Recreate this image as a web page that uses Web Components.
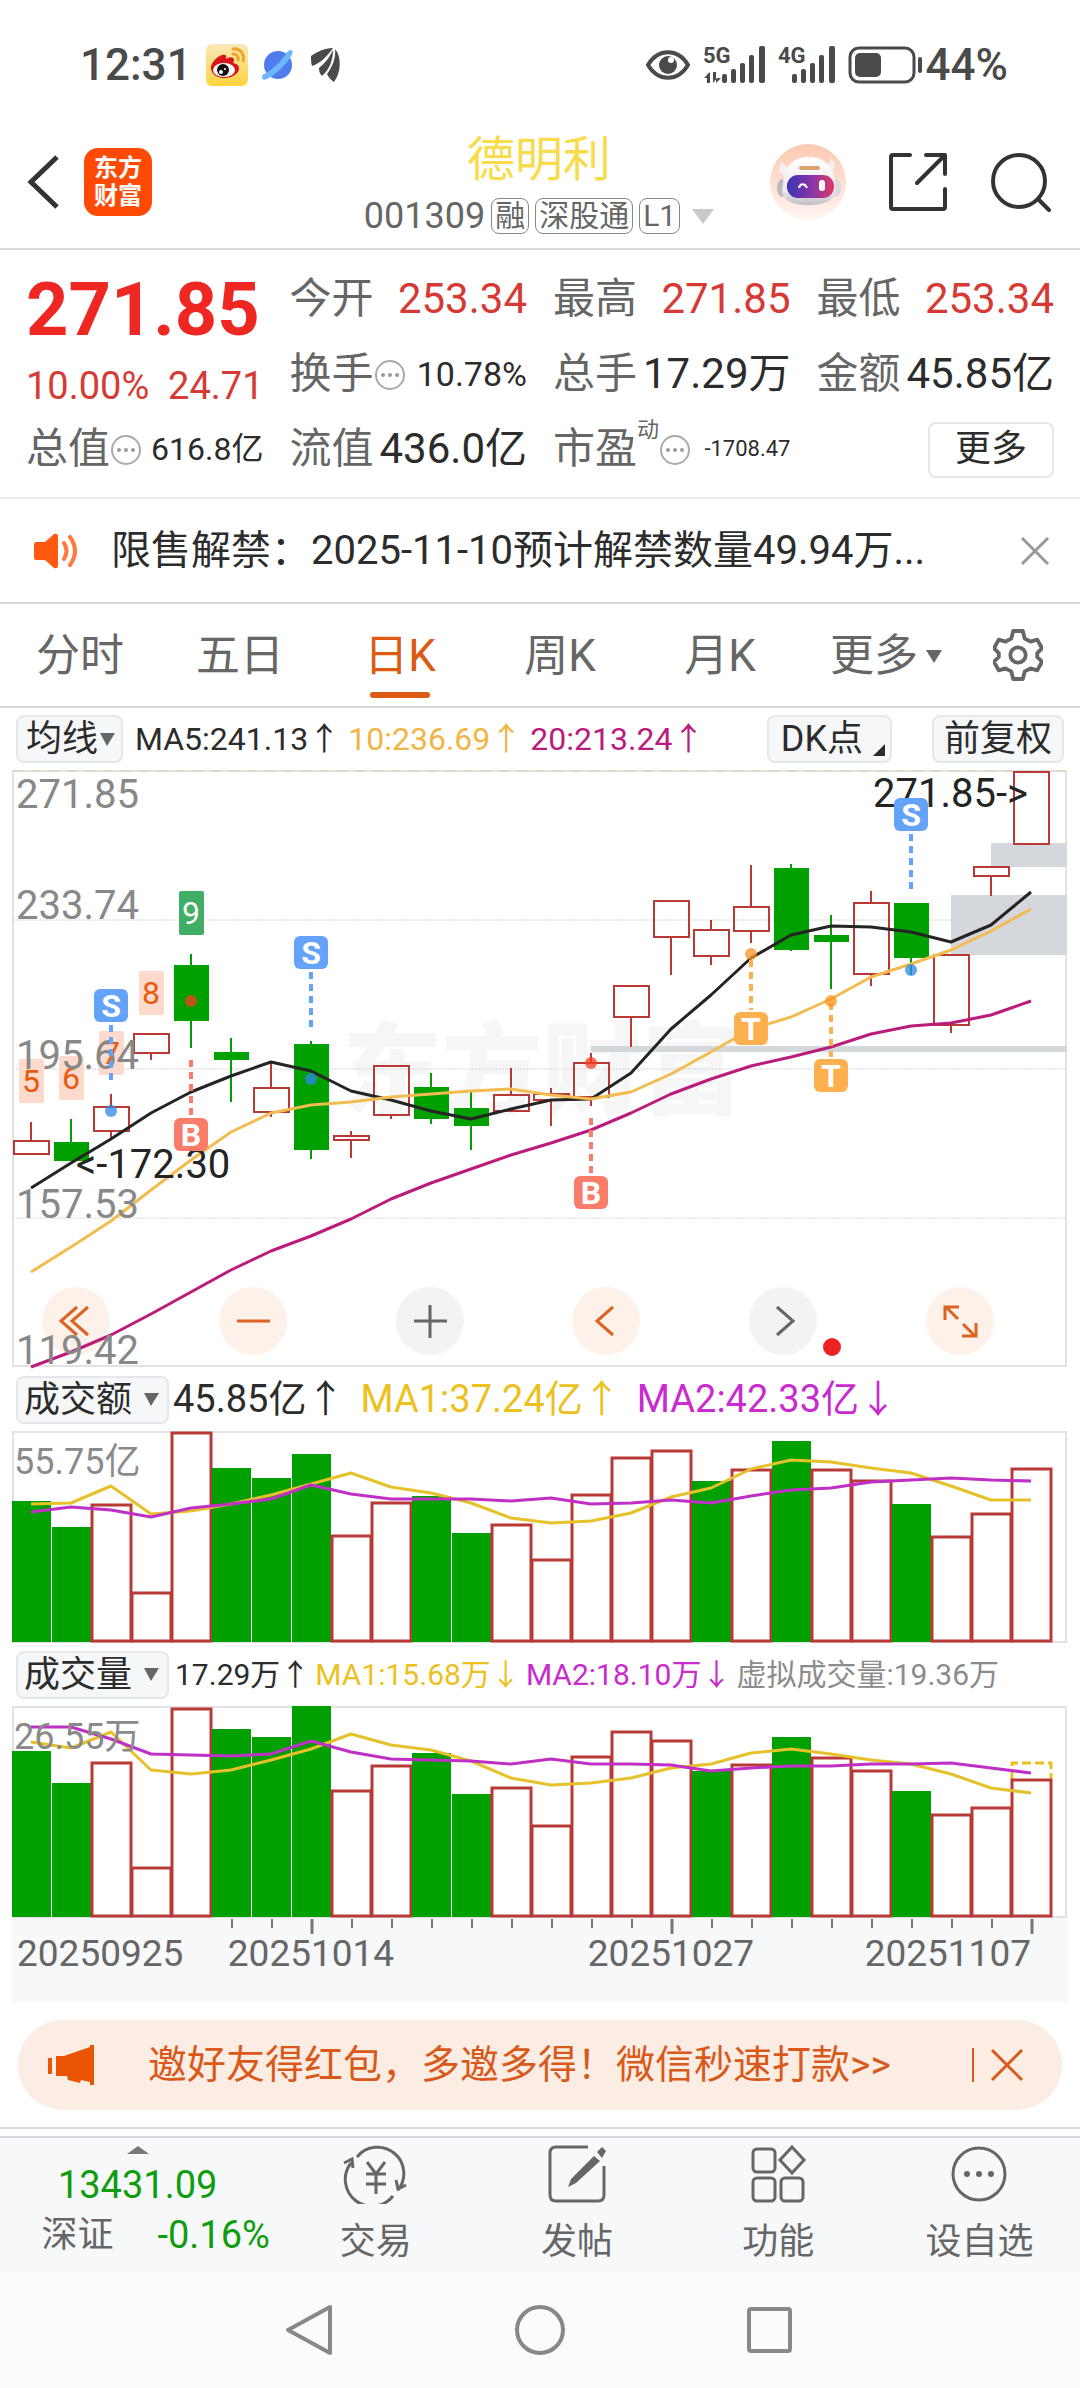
<!DOCTYPE html>
<html lang="zh-CN">
<head>
<meta charset="utf-8">
<meta name="viewport" content="width=device-width, initial-scale=1">
<title>德明利 001309</title>
<style>
  body {
    margin: 0;
    background: #fff;
    color: #2c2c2c;
    font-family: Roboto, "Noto Sans CJK SC", sans-serif;
    font-size: 36px;
    line-height: 1.2;
  }
  main {
    padding: 0 12px 17px;
    border-bottom: 2px solid #d6dade;
  }
</style>
</head>
<body>
<status-bar></status-bar>
<stock-header code="001309">德明利</stock-header>
<quote-panel></quote-panel>
<notice-bar>限售解禁：2025-11-10预计解禁数量49.94万...</notice-bar>
<period-tabs></period-tabs>
<main>
  <indicator-row>
    <drop-down slot="picker" label="均线" class="small"></drop-down>
    <span style="color:#2c2c2c">MA5:241.13↑</span>
    <span style="color:#f2b544">10:236.69↑</span>
    <span style="color:#b91c7c">20:213.24↑</span>
    <corner-button slot="end" corner>DK点</corner-button>
    <corner-button slot="end">前复权</corner-button>
  </indicator-row>
  <candle-chart></candle-chart>
  <indicator-row class="large">
    <drop-down slot="picker" label="成交额"></drop-down>
    <span style="color:#2c2c2c">45.85亿↑</span>
    <span style="color:#ecc11f">MA1:37.24亿↑</span>
    <span style="color:#c92bcf">MA2:42.33亿↓</span>
  </indicator-row>
  <volume-chart kind="amount"></volume-chart>
  <indicator-row class="compact">
    <drop-down slot="picker" label="成交量"></drop-down>
    <span style="color:#2c2c2c">17.29万↑</span>
    <span style="color:#ecc11f">MA1:15.68万↓</span>
    <span style="color:#c92bcf">MA2:18.10万↓</span>
    <span style="color:#8c8c8c">虚拟成交量:19.36万</span>
  </indicator-row>
  <volume-chart kind="volume"></volume-chart>
  <date-axis></date-axis>
  <promo-banner>邀好友得红包，多邀多得！微信秒速打款&gt;&gt;</promo-banner>
</main>
<bottom-bar></bottom-bar>
<nav-bar></nav-bar>

<script>
const RED = '#b83a36';
const GREEN = '#00a000';
const STEP = 40;
const FIRST = 19;
const cx = i => FIRST + i * STEP;
const points = list => list.map((y, i) => `${cx(i)},${y}`).join(' ');

const BUTTON_RESET = `
  button {
    padding: 0;
    border: none;
    background: none;
    color: inherit;
    font: inherit;
    cursor: pointer;
  }
  svg { display: block; }
`;

class StatusBar extends HTMLElement {
  constructor() {
    super();
    this.attachShadow({mode: 'open'});
  }

  connectedCallback() {
    this.shadowRoot.innerHTML = `
    <style>
      :host {
        display: flex;
        align-items: center;
        justify-content: space-between;
        height: 110px;
        padding: 20px 72px 0 80px;
        box-sizing: border-box;
        color: #4a4a4a;
        font-size: 44px;
        font-weight: 500;
      }
      div { display: flex; align-items: center; gap: 14px; }
      .right { gap: 12px; }
      .right span { margin-left: -10px; }
      svg { display: block; overflow: visible; }
    </style>
    <div>
      <span>12:31</span>
      <svg width="42" height="42" viewBox="0 0 42 42">
        <defs><linearGradient id="w" x1="0" y1="0" x2="0" y2="1"><stop offset="0" stop-color="#fbe9b9"/><stop offset="1" stop-color="#ffd43c"/></linearGradient></defs>
        <rect width="42" height="42" rx="6" fill="url(#w)"/>
        <path d="M5 25c-1-5 5-12 11-14 4-1 5 1 4 4 3-2 8-3 8 1 0 2-1 2-1 3 8 1 7 8 3 11-6 6-23 6-25-5z" fill="#d8151b"/>
        <ellipse cx="18" cy="26" rx="11" ry="7" fill="#fff"/>
        <circle cx="17" cy="26" r="6" fill="#111"/>
        <circle cx="15" cy="28" r="2" fill="#fff"/><circle cx="19" cy="25" r="1" fill="#fff"/>
        <path d="M27 5c7-1 12 5 10 12M27 10c4 0 6 3 5 6" fill="none" stroke="#f0a52c" stroke-width="3" stroke-linecap="round"/>
      </svg>
      <svg width="34" height="34" viewBox="0 0 34 34">
        <circle cx="16" cy="17" r="14" fill="#4f7df0"/>
        <path d="M24 5c4-4 8-4 6 1-2 7-17 22-25 25-5 2-6-1-4-5 3 1 20-13 23-21z" fill="#6cb8fb"/>
      </svg>
      <svg width="32" height="36" viewBox="0 0 32 36" fill="#4a4a4a">
        <path d="M23 1C14 1 7 5 1 9c0 4 0 7 1 10 7-2 15-9 21-18z"/>
        <path d="M23 3c-4 8-8 13-14 18 0 4 1 6 3 8 7-6 11-15 11-26z"/>
        <path d="M25 2c1 8-2 17-8 25 2 4 4 6 7 8 7-9 8-25 1-33z"/>
      </svg>
    </div>
    <div class="right">
      <svg width="46" height="32" viewBox="0 0 46 32">
        <path d="M3 16C13-1 33-1 43 16 33 33 13 33 3 16z" fill="none" stroke="#4a4a4a" stroke-width="4"/>
        <circle cx="23" cy="16" r="9" fill="#4a4a4a"/><circle cx="26" cy="11" r="3" fill="#fff"/>
      </svg>
      <svg width="63" height="38" viewBox="0 0 63 38" fill="#4a4a4a">
        <text x="0" y="17" font-size="22" font-weight="700">5G</text>
        <path d="M4 26v11h3V26L1 32h4zM10 37V26h3v11l5-5h-4z"/>
        <rect x="19" y="28" width="5" height="9" rx="2"/><rect x="28" y="23" width="5" height="14" rx="2"/>
        <rect x="37" y="17" width="5" height="20" rx="2"/><rect x="46" y="9" width="5" height="28" rx="2"/>
        <rect x="56" y="0" width="6" height="37" rx="2"/>
      </svg>
      <svg width="58" height="38" viewBox="0 0 58 38" fill="#4a4a4a">
        <text x="0" y="17" font-size="22" font-weight="700">4G</text>
        <rect x="14" y="28" width="5" height="9" rx="2"/><rect x="23" y="23" width="5" height="14" rx="2"/>
        <rect x="32" y="17" width="5" height="20" rx="2"/><rect x="41" y="9" width="5" height="28" rx="2"/>
        <rect x="51" y="0" width="6" height="37" rx="2"/>
      </svg>
      <svg width="76" height="38" viewBox="0 0 76 38">
        <rect x="2" y="2" width="64" height="34" rx="9" fill="none" stroke="#4a4a4a" stroke-width="3"/>
        <rect x="7" y="7" width="26" height="24" rx="5" fill="#4a4a4a"/>
        <path d="M72 13v12" stroke="#4a4a4a" stroke-width="4" stroke-linecap="round"/>
      </svg>
      <span>44%</span>
    </div>`;
  }
}
customElements.define('status-bar', StatusBar);

class StockHeader extends HTMLElement {
  constructor() {
    super();
    this.attachShadow({mode: 'open'});
  }

  connectedCallback() {
    this.shadowRoot.innerHTML = `
    <style>
      ${BUTTON_RESET}
      :host {
        display: grid;
        grid-template-columns: 1fr auto 1fr;
        align-items: center;
        height: 140px;
        padding: 6px 28px 0 26px;
        box-sizing: border-box;
        border-bottom: 2px solid #dadada;
      }
      .left, .right { display: flex; align-items: center; }
      .left { gap: 24px; }
      .right { justify-content: flex-end; gap: 42px; }
      .logo {
        width: 68px;
        height: 68px;
        border-radius: 14px;
        background: #ff4a06;
        color: #fff;
        font-size: 24px;
        font-weight: 700;
        line-height: 28px;
        text-align: center;
        display: grid;
        align-content: center;
      }
      h1 {
        margin: 0;
        color: #f8dc4c;
        font-size: 48px;
        font-weight: 400;
        line-height: 68px;
        text-align: center;
      }
      .sub {
        display: flex;
        align-items: center;
        gap: 6px;
        color: #666;
        line-height: 44px;
      }
      .tag {
        padding: 0 3px;
        border: 1px solid #888;
        border-radius: 8px;
        font-size: 30px;
        line-height: 34px;
      }
      .sub svg { margin-left: 6px; }
    </style>
    <div class="left">
      <button aria-label="返回"><svg width="34" height="58" viewBox="0 0 34 58"><path d="M31 4L5 29l26 25" fill="none" stroke="#333" stroke-width="5"/></svg></button>
      <div class="logo"><span>东方</span><span>财富</span></div>
    </div>
    <div>
      <h1><slot></slot></h1>
      <div class="sub">
        <span>${this.getAttribute('code')}</span>
        <span class="tag">融</span><span class="tag">深股通</span><span class="tag">L1</span>
        <svg width="22" height="15"><path d="M0 0h22L11 15z" fill="#c8c8c8"/></svg>
      </div>
    </div>
    <div class="right">
      <button aria-label="助手"><svg width="76" height="76" viewBox="0 0 76 76">
        <defs>
          <linearGradient id="bg" x1="0" y1="0" x2="0" y2="1"><stop offset="0" stop-color="#fcc9b0"/><stop offset="1" stop-color="#fff5f0"/></linearGradient>
          <linearGradient id="face"><stop offset="0" stop-color="#3a35b4"/><stop offset=".55" stop-color="#8b35a4"/><stop offset="1" stop-color="#e03a64"/></linearGradient>
          <linearGradient id="head" x1="0" y1="0" x2="0" y2="1"><stop offset="0" stop-color="#fff"/><stop offset=".7" stop-color="#ece9ec"/><stop offset="1" stop-color="#c4bfc6"/></linearGradient>
        </defs>
        <circle cx="38" cy="38" r="38" fill="url(#bg)"/>
        <path d="M12 17c-5 8-3 15 6 15l4-8c-6 0-9-3-10-7zM61 13c6 8 4 16-3 17l-5-8c5 0 8-4 8-9z" fill="#f4eff0"/>
        <ellipse cx="12" cy="44" rx="5" ry="9" fill="#bcb8c2"/><ellipse cx="66" cy="44" rx="5" ry="9" fill="#ddd8de"/>
        <path d="M13 40C14 22 24 13 39 13s26 10 26 27c3 17-10 21-27 21S9 56 13 40z" fill="url(#head)"/>
        <rect x="29" y="22" width="21" height="4" rx="2" fill="#dca26c"/>
        <rect x="17" y="31" width="47" height="23" rx="11" fill="url(#face)"/>
        <path d="M29 44c1-5 6-5 8 0" fill="none" stroke="#fff" stroke-width="2"/>
        <rect x="49" y="36" width="6" height="11" rx="3" fill="#fff"/>
      </svg></button>
      <button aria-label="分享"><svg width="60" height="60" viewBox="0 0 60 60" fill="none" stroke="#333" stroke-width="4" stroke-linecap="round" stroke-linejoin="round">
        <path d="M22 3H5q-2 0-2 2v50q0 2 2 2h50q2 0 2-2V37M38 3h19v19M56 4L29 31"/>
      </svg></button>
      <button aria-label="搜索"><svg width="62" height="60" viewBox="0 0 62 60" fill="none" stroke="#333" stroke-width="4" stroke-linecap="round">
        <circle cx="29" cy="29" r="26"/><path d="M48 47l11 11"/>
      </svg></button>
    </div>`;
  }
}
customElements.define('stock-header', StockHeader);

class QuoteItem extends HTMLElement {
  constructor() {
    super();
    this.attachShadow({mode: 'open'});
  }

  connectedCallback() {
    const info = this.hasAttribute('info') ? `
      <svg width="32" height="32" viewBox="0 0 32 32"><circle cx="16" cy="16" r="14" fill="none" stroke="#aaa" stroke-width="2"/>
      <circle cx="9" cy="16" r="2" fill="#999"/><circle cx="16" cy="16" r="2" fill="#999"/><circle cx="23" cy="16" r="2" fill="#999"/></svg>` : '';
    const sup = this.hasAttribute('sup') ? `<sup>${this.getAttribute('sup')}</sup>` : '';
    this.shadowRoot.innerHTML = `
    <style>
      :host {
        display: flex;
        align-items: center;
        font-size: 42px;
        white-space: nowrap;
      }
      .label { color: #666; }
      sup {
        align-self: flex-start;
        color: #666;
        font-size: 22px;
        line-height: 36px;
      }
      svg { display: block; }
      .value { margin-left: auto; }
      :host(.up) .value { color: #d63a35; }
      :host(.mid) .value { font-size: 34px; }
      :host(.fit) .value { font-size: 32px; }
      :host(.tiny) .value { font-size: 22px; }
    </style>
    <span class="label">${this.getAttribute('label')}</span>${sup}${info}
    <span class="value"><slot></slot></span>`;
  }
}
customElements.define('quote-item', QuoteItem);

class QuotePanel extends HTMLElement {
  constructor() {
    super();
    this.attachShadow({mode: 'open'});
  }

  connectedCallback() {
    this.shadowRoot.innerHTML = `
    <style>
      ${BUTTON_RESET}
      :host {
        display: grid;
        grid-template-columns: repeat(4, minmax(0, 1fr));
        grid-template-rows: repeat(3, 75px);
        column-gap: 26px;
        padding: 12px 26px 10px;
        border-bottom: 2px solid #ececec;
      }
      .price {
        grid-row: span 2;
        display: flex;
        flex-direction: column;
        gap: 12px;
        padding-top: 6px;
        color: #d63a35;
      }
      .price strong {
        color: #ee2723;
        font-size: 74px;
        line-height: 84px;
      }
      .change {
        display: flex;
        justify-content: space-between;
        font-size: 38px;
        line-height: 44px;
      }
      .more {
        align-self: center;
        justify-self: end;
        width: 126px;
        height: 56px;
        border: 2px solid #e6e6e6;
        border-radius: 8px;
      }
    </style>
    <div class="price">
      <strong>271.85</strong>
      <div class="change"><span>10.00%</span><span>24.71</span></div>
    </div>
    <quote-item label="今开" class="up">253.34</quote-item>
    <quote-item label="最高" class="up">271.85</quote-item>
    <quote-item label="最低" class="up">253.34</quote-item>
    <quote-item label="换手" info class="mid">10.78%</quote-item>
    <quote-item label="总手">17.29万</quote-item>
    <quote-item label="金额">45.85亿</quote-item>
    <quote-item label="总值" info class="fit">616.8亿</quote-item>
    <quote-item label="流值">436.0亿</quote-item>
    <quote-item label="市盈" sup="动" info class="tiny">-1708.47</quote-item>
    <button class="more">更多</button>`;
  }
}
customElements.define('quote-panel', QuotePanel);

class NoticeBar extends HTMLElement {
  constructor() {
    super();
    this.attachShadow({mode: 'open'});
  }

  connectedCallback() {
    this.shadowRoot.innerHTML = `
    <style>
      ${BUTTON_RESET}
      :host {
        display: flex;
        align-items: center;
        height: 103px;
        padding: 0 30px 0 33px;
        border-bottom: 2px solid #d8d8d8;
        font-size: 40px;
      }
      p { flex: 1; margin: 0 0 0 32px; white-space: nowrap; }
    </style>
    <svg width="46" height="36" viewBox="0 0 46 36">
      <path d="M3 9h9L21 1q4-1 4 2v30q0 3-4 2l-9-8H3q-2 0-2-2V11q0-2 2-2z" fill="#ff5a10"/>
      <path d="M31 10q5 8 0 16M37 4q10 14 0 28" fill="none" stroke="#ff7a3c" stroke-width="4" stroke-linecap="round"/>
    </svg>
    <p><slot></slot></p>
    <button aria-label="关闭"><svg width="30" height="30" viewBox="0 0 30 30"><path d="M2 2l26 26M28 2L2 28" stroke="#999" stroke-width="3"/></svg></button>`;
  }
}
customElements.define('notice-bar', NoticeBar);

class PeriodTabs extends HTMLElement {
  constructor() {
    super();
    this.attachShadow({mode: 'open'});
  }

  connectedCallback() {
    const tabs = ['分时', '五日', '日K', '周K', '月K'];
    this.shadowRoot.innerHTML = `
    <style>
      ${BUTTON_RESET}
      :host {
        display: grid;
        grid-template-columns: repeat(5, 160fr) 172fr 92fr;
        height: 102px;
        padding-right: 16px;
        border-bottom: 2px solid #d8d8d8;
        color: #666;
        font-size: 44px;
      }
      button {
        display: flex;
        flex-direction: column;
        align-items: center;
        justify-content: flex-end;
        gap: 6px;
        padding-bottom: 8px;
        line-height: 60px;
      }
      button::after {
        content: "";
        width: 60px;
        height: 6px;
        border-radius: 3px;
      }
      .active { color: #dd5a12; }
      .active::after { background: #dd5a12; }
      .more { display: flex; align-items: center; gap: 8px; }
      .gear { justify-content: center; padding: 0; }
      .gear::after { display: none; }
    </style>
    ${tabs.map(t => `<button class="${t === '日K' ? 'active' : ''}">${t}</button>`).join('')}
    <button><span class="more">更多<svg width="16" height="13"><path d="M0 0h16L8 13z" fill="#666"/></svg></span></button>
    <button class="gear" aria-label="设置"><svg width="50" height="54" viewBox="0 0 52 56" fill="none" stroke="#666" stroke-width="4" stroke-linejoin="round">
      <path d="M21 3h10l2 8 6 3 7-2 5 9-5 5v4l5 5-5 9-7-2-6 3-2 8H21l-2-8-6-3-7 2-5-9 5-5v-4l-5-5 5-9 7 2 6-3z"/><circle cx="26" cy="28" r="8"/>
    </svg></button>`;
  }
}
customElements.define('period-tabs', PeriodTabs);

class DropDown extends HTMLElement {
  constructor() {
    super();
    this.attachShadow({mode: 'open'});
  }

  connectedCallback() {
    const label = this.getAttribute('label');
    this.shadowRoot.innerHTML = `
    <style>
      :host { display: grid; align-items: center; }
      select, svg { grid-area: 1 / 1; }
      select {
        appearance: none;
        height: 48px;
        padding: 0 34px 0 6px;
        border: 2px solid #e4e7ec;
        border-radius: 8px;
        background: #f6f7f9;
        color: #2c2c2c;
        font: inherit;
        font-size: 36px;
        line-height: 44px;
      }
      svg {
        justify-self: end;
        margin-right: 10px;
        pointer-events: none;
      }
      :host(.small) select { padding: 0 22px 0 8px; }
      :host(.small) svg { margin-right: 8px; }
    </style>
    <select aria-label="${label}"><option>${label}</option></select>
    <svg width="15" height="13"><path d="M0 0h15L7 13z" fill="#666"/></svg>`;
  }
}
customElements.define('drop-down', DropDown);

class CornerButton extends HTMLElement {
  constructor() {
    super();
    this.attachShadow({mode: 'open'});
  }

  connectedCallback() {
    const corner = this.hasAttribute('corner') ? '<svg width="12" height="12"><path d="M12 0v12H0z" fill="#2c2c2c"/></svg>' : '';
    this.shadowRoot.innerHTML = `
    <style>
      button {
        display: flex;
        align-items: flex-end;
        gap: 10px;
        height: 48px;
        padding: 0 10px;
        border: 2px solid #e4e7ec;
        border-radius: 8px;
        background: #f6f7f9;
        color: #2c2c2c;
        font: inherit;
        font-size: 36px;
        line-height: 44px;
      }
      :host([corner]) button { padding: 0 5px 0 12px; }
      svg { display: block; margin-bottom: 5px; }
    </style>
    <button><slot></slot>${corner}</button>`;
  }
}
customElements.define('corner-button', CornerButton);

class IndicatorRow extends HTMLElement {
  constructor() {
    super();
    this.attachShadow({mode: 'open'});
  }

  connectedCallback() {
    this.shadowRoot.innerHTML = `
    <style>
      :host {
        display: flex;
        align-items: center;
        justify-content: space-between;
        height: 62px;
        padding: 0 4px;
        font-size: 32px;
        white-space: nowrap;
      }
      .values { display: flex; gap: 8px; margin-left: 12px; }
      .end { display: flex; gap: 40px; margin-left: auto; }
      :host(.large) { height: 63px; font-size: 38px; }
      :host(.large) .values { gap: 16px; margin-left: 4px; }
      :host(.compact) { height: 63px; font-size: 30px; }
      :host(.compact) .values { gap: 5px; margin-left: 6px; }
    </style>
    <slot name="picker"></slot>
    <div class="values"><slot></slot></div>
    <div class="end"><slot name="end"></slot></div>`;
  }
}
customElements.define('indicator-row', IndicatorRow);

// [direction, high, body top, body bottom, low]
const CANDLES = [
  ['up', 352, 371, 384, 384], ['down', 349, 372, 391, 391], ['up', 324, 337, 361, 370], ['up', 264, 264, 283, 290],
  ['down', 184, 195, 251, 278], ['down', 268, 282, 290, 332], ['up', 291, 318, 342, 347], ['down', 271, 274, 380, 389],
  ['up', 361, 366, 370, 388], ['up', 296, 296, 345, 349], ['down', 303, 317, 349, 354], ['down', 322, 338, 356, 380],
  ['up', 298, 325, 341, 341], ['up', 318, 324, 330, 356], ['up', 283, 293, 327, 336], ['up', 216, 216, 247, 277],
  ['up', 131, 131, 167, 205], ['up', 150, 160, 186, 195], ['up', 95, 137, 161, 173], ['down', 94, 98, 180, 181],
  ['down', 145, 165, 172, 219], ['up', 121, 133, 204, 216], ['down', 133, 133, 188, 205], ['up', 185, 185, 255, 263],
  ['up', 97, 97, 106, 126], ['up', 2, 2, 74, 74]
];
const MA5 = [418, 393, 369, 343, 322, 306, 292, 301, 321, 330, 341, 349, 339, 330, 329, 303, 259, 225, 188, 165, 156, 157, 162, 172, 155, 122];
const MA10 = [502, 477, 451, 420, 390, 362, 343, 335, 332, 327, 324, 321, 319, 325, 329, 322, 304, 282, 259, 247, 229, 207, 194, 180, 161, 139];
const MA20 = [597, 582, 565, 544, 522, 500, 481, 466, 449, 429, 413, 399, 385, 373, 360, 343, 324, 309, 296, 287, 277, 264, 256, 253, 245, 231];

// [letter, column, badge top, dash start, dash end, dot]
const SIGNALS = [
  ['S', 2, 219, 255, 312, 341], ['S', 7, 166, 202, 259, 309], ['B', 4, 348, 290, 346, 231], ['B', 14, 406, 348, 404, 293],
  ['T', 18, 242, 190, 240, 184], ['T', 20, 289, 233, 287, 231], ['S', 22, 28, 64, 121, 200]
];
const SIGNAL_COLORS = {S: '#65a3fb', B: '#fa7c6b', T: '#ffb04e'};
const DOT_COLORS = {S: '#2f86ea', B: '#fb3c22', T: '#fb941c'};
const COUNTS = [['5', 0, 289], ['6', 1, 286], ['7', 2, 261], ['8', 3, 201], ['9', 4, 121]];

class CandleChart extends HTMLElement {
  constructor() {
    super();
    this.attachShadow({mode: 'open'});
  }

  candle([dir, high, top, bottom, low], i) {
    const x = cx(i);
    if (dir === 'down') {
      return `<path d="M${x} ${high}V${low}" stroke="${GREEN}" stroke-width="2"/>
        <rect x="${x - 17}" y="${top}" width="35" height="${bottom - top}" fill="${GREEN}"/>`;
    }
    return `<path d="M${x} ${high}V${top}M${x} ${bottom}V${low}" stroke="${RED}" stroke-width="2"/>
      <rect x="${x - 17}" y="${top}" width="35" height="${bottom - top}" fill="none" stroke="${RED}" stroke-width="2"/>`;
  }

  signal([letter, i, top, from, to, dot]) {
    const x = cx(i);
    return `<path d="M${x} ${from}V${to}" stroke="${SIGNAL_COLORS[letter]}" stroke-width="4" stroke-dasharray="7 5"/>
      <circle cx="${x}" cy="${dot}" r="6" fill="${DOT_COLORS[letter]}" opacity=".75"/>
      <rect x="${x - 17}" y="${top}" width="34" height="33" rx="6" fill="${SIGNAL_COLORS[letter]}"/>
      <text x="${x}" y="${top + 28}" font-size="32" font-weight="700" fill="#fff" text-anchor="middle">${letter}</text>`;
  }

  count([digit, i, top]) {
    const last = digit === '9';
    return `<rect x="${cx(i) - 12}" y="${top}" width="25" height="44" rx="2" fill="${last ? '#41ae65' : '#fddacb'}"/>
      <text x="${cx(i)}" y="${top + 33}" font-size="32" fill="${last ? '#fff' : '#e9590c'}" text-anchor="middle">${digit}</text>`;
  }

  connectedCallback() {
    const scale = [['271.85', 38], ['233.74', 149], ['195.64', 299], ['157.53', 448], ['119.42', 594]];
    this.shadowRoot.innerHTML = `
    <style>
      ${BUTTON_RESET}
      :host { display: block; position: relative; }
      /* drawn over the round buttons, so clicks have to pass through */
      .plot {
        position: relative;
        z-index: 1;
        width: 100%;
        overflow: visible;
        pointer-events: none;
      }
      .tools {
        position: absolute;
        left: 0;
        right: 0;
        bottom: 13px;
        display: flex;
        justify-content: space-between;
        padding: 0 74px 0 30px;
      }
      .tools button {
        width: 68px;
        height: 68px;
        border-radius: 50%;
        background: #fef1ea;
      }
      .tools button.off { background: #f3f3f3; }
    </style>
    <svg class="plot" viewBox="0 0 1056 598">
      <text x="530" y="336" font-size="100" font-weight="900" fill="#f6f6f6" text-anchor="middle">东方财富</text>
      <rect x="1" y="1" width="1053" height="595" fill="none" stroke="#e2e2e2" stroke-width="2"/>
      <path d="M1 1H1054" stroke="#dccaa8" stroke-dasharray="10 8"/>
      <path d="M1 150H1054M1 299H1054M1 448H1054" stroke="#d4d4d4" stroke-dasharray="2 1"/>
      <path d="M939 125h116v60H939zM979 73h76v24h-76zM579 276h476v6H579z" fill="#d4d7dc"/>
      ${CANDLES.map(this.candle).join('')}
      ${COUNTS.map(this.count).join('')}
      <g fill="none" stroke-width="3" stroke-linejoin="round">
        <polyline points="${points(MA5)}" stroke="#242424"/>
        <polyline points="${points(MA10)}" stroke="#f2bc50"/>
        <polyline points="${points(MA20)}" stroke="#bb1c7c"/>
      </g>
      <g font-size="40" fill="#888">${scale.map(([t, y]) => `<text x="4" y="${y}">${t}</text>`).join('')}</g>
      <g font-size="40" fill="#242424"><text x="64" y="408">&lt;-172.30</text><text x="1016" y="37" text-anchor="end">271.85-&gt;</text></g>
      ${SIGNALS.map(this.signal).join('')}
      <circle cx="820" cy="577" r="9" fill="#ee2222"/>
    </svg>
    <div class="tools">
      ${this.tool('最早', 'M35 20L19 34l16 14M46 20L30 34l16 14')}
      ${this.tool('缩小', 'M18 34h33')}
      ${this.tool('放大', 'M18 34h33M34 18v33', true)}
      ${this.tool('左移', 'M41 20L25 34l16 14')}
      ${this.tool('右移', 'M28 20l16 14-16 14', true)}
      ${this.tool('全屏', 'M19 33V20h14M20 20l12 12M50 36v13H36M49 49L37 37')}
    </div>`;
  }

  tool(label, d, off) {
    return `<button class="${off ? 'off' : ''}" aria-label="${label}"><svg viewBox="0 0 68 68"><path d="${d}" fill="none" stroke="${off ? '#666' : '#dd6322'}" stroke-width="3"/></svg></button>`;
  }
}
customElements.define('candle-chart', CandleChart);

const DOWN_DAYS = [0, 1, 5, 6, 7, 10, 11, 17, 19, 22];
const BARS = {
  amount: {
    label: '55.75亿',
    tops: [70, 96, 73, 161, 1, 37, 47, 23, 104, 71, 65, 102, 93, 128, 63, 26, 19, 50, 38, 10, 38, 49, 73, 105, 82, 37],
    ma1: [73, 72, 55, 83, 80, 73, 64, 53, 42, 56, 62, 72, 87, 92, 90, 82, 66, 57, 38, 29, 31, 37, 42, 55, 69, 69],
    ma2: [81, 76, 79, 86, 77, 73, 68, 54, 63, 68, 68, 68, 70, 67, 73, 72, 69, 72, 65, 59, 57, 51, 49, 47, 49, 50]
  },
  volume: {
    label: '26.55万',
    tops: [45, 77, 56, 161, 2, 23, 31, 0, 84, 59, 47, 88, 81, 119, 50, 25, 34, 65, 58, 31, 51, 64, 85, 108, 101, 73],
    ma1: [36, 42, 26, 64, 68, 64, 54, 43, 28, 39, 44, 55, 72, 79, 77, 72, 62, 58, 47, 43, 48, 54, 58, 68, 82, 87],
    ma2: [21, 21, 33, 48, 49, 50, 48, 35, 46, 53, 54, 55, 58, 53, 58, 58, 59, 65, 62, 60, 60, 58, 58, 57, 62, 67],
    virtual: 57
  }
};

class VolumeChart extends HTMLElement {
  constructor() {
    super();
    this.attachShadow({mode: 'open'});
  }

  connectedCallback() {
    const data = BARS[this.getAttribute('kind')];
    const bars = data.tops.map((y, i) => DOWN_DAYS.includes(i)
      ? `<rect x="${i * STEP}" y="${y}" width="39" height="${211 - y}" fill="${GREEN}"/>`
      : `<rect x="${i * STEP}" y="${y + 1}" width="39" height="${209 - y}" fill="none" stroke="${RED}" stroke-width="3"/>`);
    const virtual = data.virtual
      ? `<path d="M1000 ${data.tops[25]}V${data.virtual}H1039V${data.tops[25]}" fill="none" stroke="#ecc11f" stroke-width="3" stroke-dasharray="9 4"/>` : '';
    this.shadowRoot.innerHTML = `
    <style>
      :host { display: block; }
      svg { display: block; width: 100%; }
    </style>
    <svg viewBox="0 0 1056 212">
      <rect x="1" y="1" width="1053" height="210" fill="none" stroke="#e2e2e2" stroke-width="2"/>
      ${virtual}${bars.join('')}
      <g fill="none" stroke-width="3" stroke-linejoin="round">
        <polyline points="${points(data.ma1)}" stroke="#e6c12a"/>
        <polyline points="${points(data.ma2)}" stroke="#c030c6"/>
      </g>
      <text x="2" y="43" font-size="36" fill="#8a8a8a">${data.label}</text>
    </svg>`;
  }
}
customElements.define('volume-chart', VolumeChart);

class DateAxis extends HTMLElement {
  constructor() {
    super();
    this.attachShadow({mode: 'open'});
  }

  connectedCallback() {
    const major = [7, 16, 25];
    let ticks = '';
    for (let i = 5; i < 26; i++) {
      const big = major.includes(i);
      ticks += `<path d="M${cx(i) + 1} 1v${big ? 15 : 9}" stroke="#777" stroke-width="${big ? 3 : 2}"/>`;
    }
    this.shadowRoot.innerHTML = `
    <style>
      :host { display: block; background: #f7f8fa; }
      svg { display: block; width: 100%; }
    </style>
    <svg viewBox="0 0 1056 84">
      ${ticks}
      <g font-size="37" fill="#666">
        <text x="5" y="48">20250925</text>
        <text x="${cx(7)}" y="48" text-anchor="middle">20251014</text>
        <text x="${cx(16)}" y="48" text-anchor="middle">20251027</text>
        <text x="${cx(25)}" y="48" text-anchor="end">20251107</text>
      </g>
    </svg>`;
  }
}
customElements.define('date-axis', DateAxis);

class PromoBanner extends HTMLElement {
  constructor() {
    super();
    this.attachShadow({mode: 'open'});
  }

  connectedCallback() {
    this.shadowRoot.innerHTML = `
    <style>
      ${BUTTON_RESET}
      :host {
        display: flex;
        align-items: center;
        height: 90px;
        margin: 18px 6px 0;
        padding: 0 38px 0 30px;
        border-radius: 45px;
        background: #fcede4;
        color: #d9591a;
        font-size: 39px;
        white-space: nowrap;
      }
      a {
        flex: 1;
        margin-left: 54px;
        color: inherit;
        text-decoration: none;
      }
      button { padding-left: 16px; border-left: 2px solid #d9591a; }
    </style>
    <svg width="46" height="40" viewBox="0 0 46 40" fill="#ea5504">
      <path d="M0 13h4v16H0zM8 11h8L42 2V0h4v40h-4v-3l-9-2-1 3-12-3-1-4H8z"/>
    </svg>
    <a href="#"><slot></slot></a>
    <button aria-label="关闭"><svg width="34" height="34" viewBox="0 0 34 34"><path d="M2 2l30 30M32 2L2 32" stroke="#d9591a" stroke-width="3"/></svg></button>`;
  }
}
customElements.define('promo-banner', PromoBanner);

class BottomBar extends HTMLElement {
  constructor() {
    super();
    this.attachShadow({mode: 'open'});
  }

  connectedCallback() {
    const items = [
      ['交易', '<path d="M14 13A26 26 0 0 1 55 46M50 52A26 26 0 0 1 8 19M1 19l8-4 1 9M63 41l-8 4-2-9M24 18l9 12 9-12M33 30v20M23 30h20M23 40h20"/>'],
      ['发帖', '<path d="M44 3H12q-6 0-6 6v42q0 6 6 6h42q6 0 6-6V22"/><path d="M50 12l6 5-24 22-8 4 3-8zM53 8l5-5 4 4-4 7z" fill="#666" stroke="none"/>'],
      ['功能', '<rect x="8" y="5" width="22" height="23" rx="4"/><rect x="8" y="34" width="22" height="23" rx="4"/><rect x="36" y="34" width="22" height="23" rx="4"/><path d="M47 3l12 13-12 13-12-13z"/>'],
      ['设自选', '<circle cx="33" cy="30" r="26"/><g fill="#666" stroke="none"><circle cx="21" cy="30" r="3"/><circle cx="33" cy="30" r="3"/><circle cx="45" cy="30" r="3"/></g>']
    ];
    this.shadowRoot.innerHTML = `
    <style>
      ${BUTTON_RESET}
      :host {
        display: grid;
        grid-template-columns: 275fr repeat(4, 201fr);
        height: 134px;
        margin-top: 7px;
        border-top: 2px solid #d6dade;
        background: #f7f8fa;
        color: #666;
      }
      .index {
        display: flex;
        flex-direction: column;
        align-items: center;
        padding-top: 8px;
        color: #0f9d0f;
        font-size: 38px;
        line-height: 50px;
      }
      .index svg { margin-bottom: 6px; }
      .index div { display: flex; gap: 44px; padding-left: 36px; }
      .name { color: #666; font-size: 36px; }
      button {
        display: flex;
        flex-direction: column;
        align-items: center;
        gap: 14px;
        padding-top: 6px;
        line-height: 48px;
      }
    </style>
    <div class="index">
      <svg width="22" height="8"><path d="M0 8L11 0l11 8z" fill="#777"/></svg>
      <span>13431.09</span>
      <div><span class="name">深证</span><span>-0.16%</span></div>
    </div>
    ${items.map(([label, icon]) => `<button><svg width="66" height="60" viewBox="0 0 66 60" fill="none" stroke="#666" stroke-width="3">${icon}</svg>${label}</button>`).join('')}`;
  }
}
customElements.define('bottom-bar', BottomBar);

class NavBar extends HTMLElement {
  constructor() {
    super();
    this.attachShadow({mode: 'open'});
  }

  connectedCallback() {
    this.shadowRoot.innerHTML = `
    <style>
      ${BUTTON_RESET}
      :host {
        display: flex;
        align-items: center;
        justify-content: center;
        gap: 178px;
        height: 116px;
        background: #fbfbfb;
      }
      svg { fill: none; stroke: #888; stroke-width: 4; stroke-linejoin: round; }
    </style>
    <button aria-label="后退"><svg width="52" height="52"><path d="M46 3v46L4 26z"/></svg></button>
    <button aria-label="主屏幕"><svg width="52" height="52"><circle cx="26" cy="26" r="23"/></svg></button>
    <button aria-label="最近任务"><svg width="52" height="52"><rect x="5" y="5" width="41" height="42" rx="2"/></svg></button>`;
  }
}
customElements.define('nav-bar', NavBar);
</script>
</body>
</html>
